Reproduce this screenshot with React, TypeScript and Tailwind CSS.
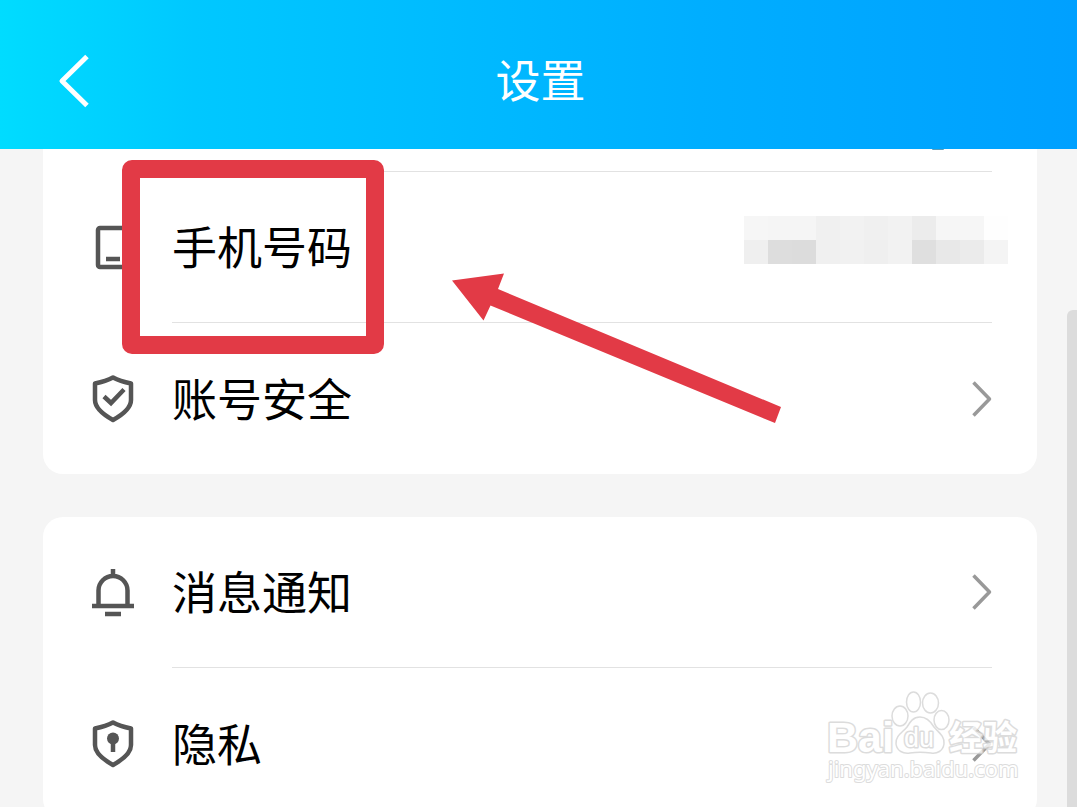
import React from 'react';

interface RowProps {
  icon: React.ReactNode;
  label: string;
  last?: boolean;
  children?: React.ReactNode;
}

const SHIELD = 'M24 2.5C18.5 5.5 11 7.5 6 8.5V25C6 33 15 40 24 45C33 40 42 33 42 25V8.5C37 7.5 29.5 5.5 24 2.5Z';

const iconProps = {
  viewBox: '0 0 48 48',
  fill: 'none',
  stroke: '#555',
  strokeWidth: 4.5,
  className: 'size-12 shrink-0',
  'aria-hidden': true,
};

const PhoneIcon = () => (
  <svg {...iconProps}>
    <rect x="9" y="4" width="30" height="39" rx="2" />
    <path d="M17 35H31" />
  </svg>
);

const ShieldCheckIcon = () => (
  <svg {...iconProps}>
    <path d={SHIELD} strokeLinejoin="round" />
    <path d="M15 21.5L22 28L35 14.5" />
  </svg>
);

const BellIcon = () => (
  <svg {...iconProps}>
    <path d="M24 0V7M9.5 37V21.5A14.5 14.5 0 0 1 38.5 21.5V37" />
    <path d="M3 37H45M16 45H32" />
  </svg>
);

const ShieldKeyIcon = () => (
  <svg {...iconProps}>
    <path d={SHIELD} strokeLinejoin="round" />
    <circle cx="24" cy="18.5" r="6" fill="#555" stroke="none" />
    <path d="M24 20V32" />
  </svg>
);

const Chevron = () => (
  <svg viewBox="0 0 20 36" fill="none" stroke="#999" strokeWidth="3.5" className="h-9 w-5 shrink-0" aria-hidden>
    <path d="M1.5 1.5L17.5 18L1.5 34.5" strokeLinejoin="round" />
  </svg>
);

const SettingRow: React.FC<RowProps> = ({ icon, label, last, children }) => (
  <a href="#" className="flex h-[151px] items-center gap-[35px] pl-[46px]">
    {icon}
    <div
      className={`mr-[45px] flex h-full flex-1 items-center justify-between ${last ? '' : 'border-b border-[#e2e2e2]'}`}
    >
      <span className="pb-0.5 text-[45px] leading-[60px] text-black">{label}</span>
      {children ?? <Chevron />}
    </div>
  </a>
);

// greys of the masked phone number, one per block
const MASK = [
  ['#f6f6f6', '#f5f5f5', '#f5f5f5', '#f0f0f0', '#f2f2f2', '#f0f0f0', '#f2f2f2', '#ececec', '#f6f6f6', '#f6f6f6', '#fefefe'],
  ['#efefef', '#dddddd', '#dcdcdc', '#f0f0f0', '#f1f1f1', '#efefef', '#f2f2f2', '#dfdfdf', '#e8e8e8', '#ebebeb', '#f4f4f4'],
];

const MaskedNumber = () => (
  <div className="-mr-4 mb-3.5 grid grid-cols-11" aria-hidden>
    {MASK.flat().map((color, i) => (
      <span key={i} className="size-6" style={{ backgroundColor: color }} />
    ))}
  </div>
);

const Annotation = () => (
  <>
    <div className="pointer-events-none absolute -top-3 left-[79px] h-[194px] w-[262px] rounded-[10px] border-18 border-[#e23a46]" />
    <svg
      viewBox="0 0 330 152"
      className="pointer-events-none absolute top-[101px] left-[409px] h-[152px] w-[330px]"
      aria-hidden
    >
      <path d="M0 7.5L52 0.5L46 16L329 134L323 150L38.5 32.5L31.5 47.5Z" fill="#e23a46" />
    </svg>
  </>
);

const Watermark = () => (
  <svg
    viewBox="0 0 200 100"
    className="pointer-events-none absolute right-[54px] bottom-[21px] h-[100px] w-[200px] opacity-80"
    fill="#fff"
    stroke="#d4d4d4"
    strokeWidth="1.5"
    strokeLinejoin="round"
    aria-hidden
  >
    <ellipse cx="77" cy="30" rx="8" ry="10" />
    <ellipse cx="90.5" cy="16" rx="7" ry="10" />
    <ellipse cx="107.5" cy="17" rx="8" ry="10" />
    <ellipse cx="118.5" cy="34" rx="7.5" ry="9.5" />
    <path d="M97 31C104 31 108 36 111 41C115 46 122 50 121 58C120 65 114 68 108 67C100 66 94 66 87 67C80 68 74 65 73 58C72 50 80 46 84 41C87 36 90 31 97 31Z" />
    <g fontFamily="'Liberation Sans', sans-serif" fontWeight="700" strokeWidth="3" paintOrder="stroke">
      <text x="4" y="66" fontSize="43">Bai</text>
      <text x="126" y="64" fontSize="34" fontFamily="'Noto Sans CJK SC', sans-serif">经验</text>
      <text x="81" y="61" fontSize="27" fontWeight="400">du</text>
    </g>
    <text x="5" y="91" fontSize="22" strokeWidth="2" paintOrder="stroke" fontFamily="'Noto Sans', sans-serif">
      jingyan.baidu.com
    </text>
  </svg>
);

const App: React.FC = () => {
  return (
    <div className="relative flex h-screen flex-col overflow-hidden bg-[#f5f5f5] font-['Noto_Sans_CJK_SC',sans-serif]">
      <header className="grid h-[149px] shrink-0 grid-cols-[1fr_auto_1fr] items-center bg-[linear-gradient(90deg,#00dcff_0%,#00c8ff_18%,#00bcff_40%,#00aeff_65%,#00a0ff_100%)] pt-3 pl-1 text-white">
        <button type="button" aria-label="返回" className="ml-[52px] w-9">
          <svg viewBox="0 0 36 54" fill="none" stroke="currentColor" strokeWidth="5" className="h-[54px] w-9">
            <path d="M31 2.5L6 27L31 51.5" strokeLinejoin="round" />
          </svg>
        </button>
        <h1 className="pb-1 text-[45px] leading-[60px]">设置</h1>
      </header>

      <main className="flex flex-1 flex-col gap-[43px] overflow-hidden pr-10 pl-[43px]">
        <section className="shrink-0 rounded-b-[20px] bg-white">
          <div className="mr-[45px] ml-[129px] flex h-[23px] justify-end border-b border-[#e2e2e2] pr-12">
            <span className="h-px w-3 rounded-b-full bg-[#5b9cb8]" />
          </div>
          <div className="relative">
            <SettingRow icon={<PhoneIcon />} label="手机号码">
              <MaskedNumber />
            </SettingRow>
            <Annotation />
          </div>
          <SettingRow icon={<ShieldCheckIcon />} label="账号安全" last />
        </section>

        <section className="shrink-0 rounded-[20px] bg-white">
          <SettingRow icon={<BellIcon />} label="消息通知" />
          <SettingRow icon={<ShieldKeyIcon />} label="隐私" last />
        </section>
      </main>

      <div className="absolute top-[310px] right-0 bottom-0 w-2.5 rounded-tl-md bg-[#dcdcdc]" />
      <Watermark />
    </div>
  );
};

export default App;
